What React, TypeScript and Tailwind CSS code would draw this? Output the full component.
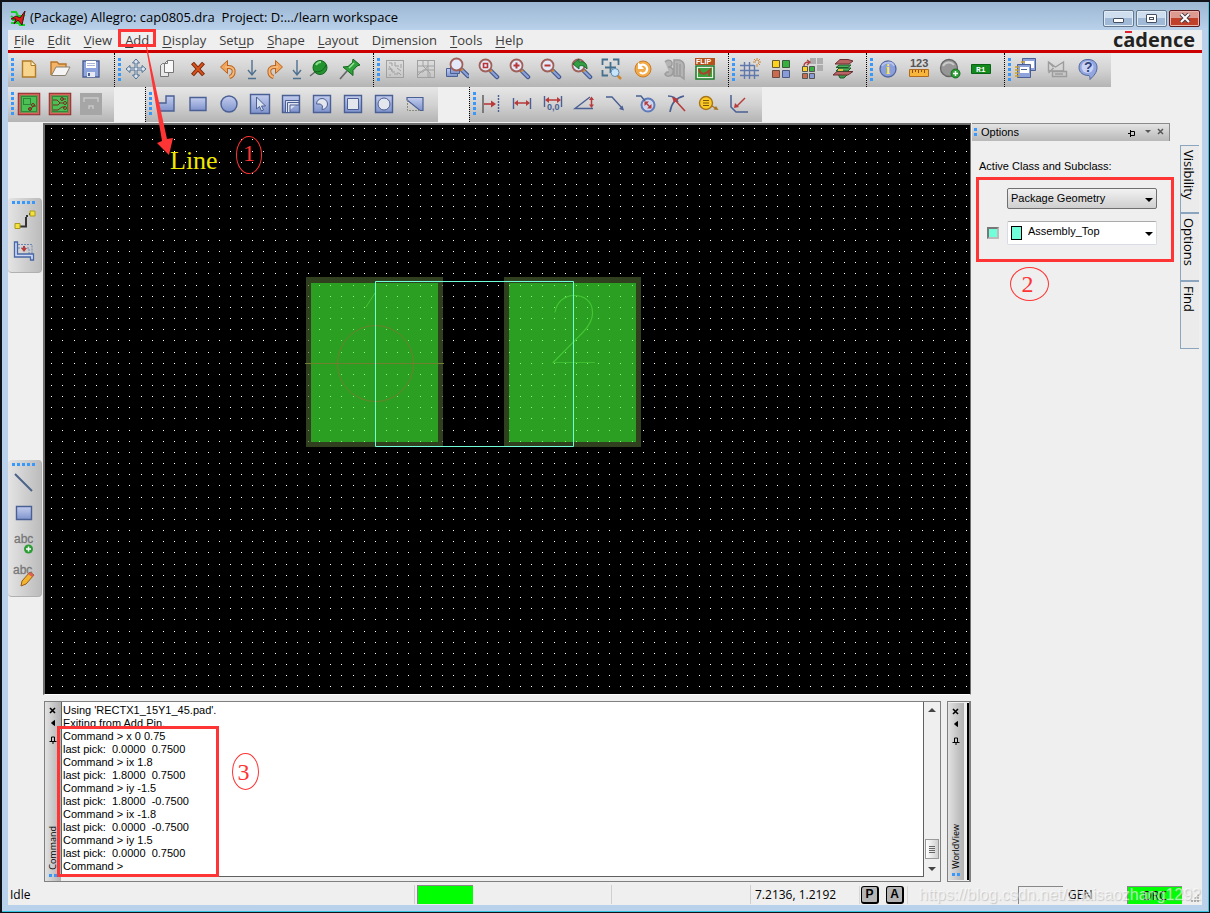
import React from "react";
import clsx from "clsx";

const Icon = ({ children }: { children: React.ReactNode }) => (
  <svg viewBox="0 0 24 24" width="24" height="24" fill="none" aria-hidden="true">
    {children}
  </svg>
);

const BLUE = "#4a5f93";
const FILL = "url(#steel)";

const Lens = ({ children }: { children?: React.ReactNode }) => (
  <>
    <path d="M15 14l6 6" stroke="#44598f" strokeWidth="4.500" strokeLinecap="round" />
    <path d="M15 14l6 6" stroke="#8ea4d8" strokeWidth="2" strokeLinecap="round" />
    <path d="M13 12l2.500 2.500" stroke="#d48a2c" strokeWidth="3" />
    <circle cx="9.500" cy="8.500" r="6" fill="#e4e9fa" stroke="#a0605a" strokeWidth="1.800" />
    {children}
  </>
);

const Undo = () => (
  <>
    <path
      d="M8 10h3.500c4 0 6 2.500 5 6-.500 2-2 3.500-4 4"
      stroke="#b8631f"
      strokeWidth="4"
    />
    <path d="M10.500 3.500v13L3.500 10z" fill="#f0a55c" stroke="#b8631f" />
    <path d="M8 10h3.500c4 0 6 2.500 5 6-.500 2-2 3.500-4 4" stroke="#f5b778" strokeWidth="2" />
  </>
);

const Board = ({ children }: { children: React.ReactNode }) => (
  <>
    <rect x="2" y="2" width="20" height="20" fill="#4cbf55" stroke="#8a2f2f" strokeWidth="2.500" />
    <rect x="2.500" y="2.500" width="19" height="19" stroke="#d8605c" strokeWidth="1.500" />
    <rect x="4.500" y="4.500" width="15" height="15" stroke="#2d8a38" />
    {children}
  </>
);

const GrayGrid = ({ d }: { d: string }) => (
  <>
    <rect x="3.500" y="3.500" width="17" height="17" stroke="#a0a0a0" />
    <path d={d} stroke="#a0a0a0" />
  </>
);

const Caret = () => (
  <path d="M12 3v14M8 13l4 5 4-5M8 21.500h8" stroke="#4f6f8f" strokeWidth="1.400" />
);

const icons: Record<string, React.ReactNode> = {
  New: (
    <>
      <path d="M5.500 4h9l4 4v12h-13z" fill="#f7d58e" stroke="#b07a28" strokeWidth="1.400" />
      <path d="M14 4v4.500h4.500" fill="#fff3cf" stroke="#b07a28" />
    </>
  ),
  Open: (
    <>
      <path d="M3 18V5h6l2 2h7v4" fill="#f3b468" stroke="#b8742a" strokeWidth="1.400" />
      <path d="M3.500 18.500L8 10h14l-4.500 8.500z" fill="#f4f4f4" stroke="#8a8070" />
    </>
  ),
  Save: (
    <>
      <path d="M4 4h16v16H4z" fill="#8ea4dc" stroke={BLUE} strokeWidth="1.400" />
      <path d="M7 4h10v7H7z" fill="#fff" />
      <path d="M8 6.500h8M8 8.500h8" stroke="#a9b6d8" />
      <path d="M8 15h8v5H8z" fill="#e6e9f2" />
      <path d="M9 16h2v3H9z" fill={BLUE} />
    </>
  ),
  Move: (
    <path
      d="M12 2l3.500 4H13v5h5V8.500l4 3.500-4 3.500V13h-5v5h2.500L12 22l-3.500-4H11v-5H6v2.500L2 12l4-3.500V11h5V6H8.500z"
      fill="#dfe6ef"
      stroke="#4f6f8f"
    />
  ),
  Copy: (
    <>
      <path d="M5.500 8.500l2-2h6v13h-8z" fill="#e8e8e8" stroke="#777" />
      <path d="M9.500 6.500l3-3h6v12h-9z" fill="#f8f8f8" stroke="#777" />
      <path d="M9.500 6.500h3v-3" stroke="#777" />
    </>
  ),
  Delete: (
    <>
      <path d="M6.500 6l11 12M17.500 6l-11 12" stroke="#7a2409" strokeWidth="4" />
      <path d="M7 6.500l10 11M17 6.500l-10 11" stroke="#d5521a" strokeWidth="2" />
    </>
  ),
  Undo: <Undo />,
  "Undo list": <Caret />,
  Redo: (
    <g transform="matrix(-1 0 0 1 24 0)">
      <Undo />
    </g>
  ),
  "Redo list": <Caret />,
  Unfix: (
    <>
      <path d="M8 15l-5 4" stroke="#666" strokeWidth="1.500" />
      <circle cx="13" cy="10.500" r="7" fill="#23932f" stroke="#16631f" />
      <path d="M7 14c4 2 10 0 12-6" stroke="#14601d" />
      <path d="M9 8c1-2 3-3 5-3" stroke="#8de08f" strokeWidth="2" />
    </>
  ),
  Fix: (
    <>
      <path d="M9 14l-7 8" stroke="#666" strokeWidth="1.600" />
      <path
        d="M15 2l7 6-3 1-4 4.500v5L5 10l5-.500 4.500-4z"
        fill="#2fa23c"
        stroke="#16631f"
      />
      <path d="M11 11l5-5" stroke="#9be59b" strokeWidth="1.500" />
    </>
  ),
  "Grid toggle": <GrayGrid d="M6 6h3v3M12 5v4h4M18 7v4M5 12h4v3h3M14 11l4 3M7 17v2M11 17h4v-2M6 9l3 5M16 16l2 2" />,
  Ratsnest: <GrayGrid d="M4 9h16M4 15h5l5-6M9 4v5l7 7v4M14 4v16M4 18l5-5h11" />,
  "Zoom points": (
    <>
      <path d="M1.500 11.500h11v8h-11z" fill={FILL} stroke={BLUE} />
      <path d="M5.500 7.500h9v9h-9z" fill={FILL} stroke={BLUE} />
      <g transform="translate(2 -1)">
        <Lens />
      </g>
    </>
  ),
  "Zoom fit": (
    <Lens>
      <path d="M7.500 6.500h4v4h-4z" stroke="#b83434" strokeWidth="1.600" />
    </Lens>
  ),
  "Zoom in": (
    <Lens>
      <path d="M6.500 8.500h6M9.500 5.500v6" stroke="#b83434" strokeWidth="2" />
    </Lens>
  ),
  "Zoom out": (
    <Lens>
      <path d="M6.500 8.500h6" stroke="#b83434" strokeWidth="2" />
    </Lens>
  ),
  "Zoom previous": (
    <Lens>
      <path d="M18 12c0-6-3-8-8-7V2L4 7l6 5V9c4-1 5 0 8 3z" fill="#34a043" stroke="#19682a" />
    </Lens>
  ),
  "Zoom selection": (
    <>
      <path
        d="M2.500 8V2.500H8M13 2.500h5.500V8M2.500 13v5.500H8M10.500 5v11M5 10.500h11"
        stroke="#44708e"
        strokeWidth="1.800"
      />
      <path d="M17 18l4 4" stroke="#cf8630" strokeWidth="2.500" />
      <circle cx="15" cy="15.500" r="4" fill="#c6e4fa" stroke="#5f8bb0" />
    </>
  ),
  Redraw: (
    <>
      <circle cx="12" cy="12" r="8" fill="#f3aa4a" stroke="#c97b23" />
      <path d="M8 9c6-4 10 2 7 6-2 2-5 2-6 0" stroke="#fff" strokeWidth="2.200" />
      <path d="M7 5v7h6z" fill="#fff" />
    </>
  ),
  "3D view": (
    <path
      d="M3 5c2-3 8-2 7 2 0 3-3 3-4 3 5 0 6 3 5 6-1 4-7 4-8 1l2-2h2M12 3h5c5 1 6 5 5 10v9l-4-3h-6zM15 6v12M18 7v13"
      fill="#b4b4b4"
      stroke="#9c9c9c"
      strokeWidth="1.500"
    />
  ),
  Flip: (
    <>
      <path d="M3 9h18v13H3z" fill="#e8f0e0" stroke="#1e7a2a" strokeWidth="1.500" />
      <path d="M5 11h14v9H5z" fill="#3ca33c" />
      <path d="M6 12c1 6 6 6 11 1l-1 6" stroke="#a8442c" strokeWidth="2" />
      <path d="M2 1h20v7H2z" fill="#b5521c" />
      <text x="3" y="7" fill="#fff" className="font-['Liberation_Sans'] text-[7px] font-bold">
        FLIP
      </text>
    </>
  ),
  Grid: (
    <>
      <path d="M6.500 5v17M11.500 5v17M16.500 8v14M2 8.500h14M2 13.500h19M2 18.500h19" stroke="#6078ac" strokeWidth="1.400" />
      <path d="M19 1v3M19 7v3M15 5h3M20 5h3M16 2l2 2M22 2l-2 2M22 8l-2-2" stroke="#c98a3c" />
    </>
  ),
  Colors: (
    <>
      <path d="M3.500 3.500h7v7h-7z" fill="#fbd21c" stroke="#6a5a30" />
      <path d="M13.500 3.500h7v7h-7z" fill="#37b03f" stroke="#3b5a3c" />
      <path d="M3.500 13.500h7v7h-7z" fill="#cb6b4d" stroke="#6b4a40" />
      <path d="M13.500 13.500h7v7h-7z" fill="#8a9cd8" stroke="#4c5880" />
    </>
  ),
  Shadow: (
    <>
      <path d="M10 1h6v6h-6zM17 1h6v6h-6zM17 8h6v6h-6z" fill="#adadad" />
      <path d="M4 9c0-3 2-4 5-4M7 3l3 2-3 3" stroke="#b04040" strokeWidth="1.400" />
      <path d="M2.500 9.500h5v5h-5z" fill="#fbd21c" stroke="#555" />
      <path d="M9.500 9.500h5v5h-5z" fill="#37b03f" stroke="#555" />
      <path d="M2.500 16.500h5v5h-5z" fill="#cb6b4d" stroke="#555" />
      <path d="M9.500 16.500h5v5h-5z" fill="#8a9cd8" stroke="#555" />
    </>
  ),
  "Cross section": (
    <>
      <path d="M7 17h10l-4 4H9z" fill="#3a9a4a" stroke="#1f5a2a" />
      <path d="M6 14.500h16l-5 3.500H2z" fill="#b86464" stroke="#6a2f2f" />
      <path d="M8 11h12l-3 3H5z" fill="#4bb058" stroke="#1f5a2a" />
      <path d="M8 8h12l-3 2.500H5z" fill="#4bb058" stroke="#1f5a2a" />
      <path d="M9 2.500h8l5 1.500-4 3H4z" fill="#b86464" stroke="#6a2f2f" />
      <path d="M7 13h5" stroke="#e2c04a" strokeWidth="2" />
    </>
  ),
  Info: (
    <>
      <circle cx="12" cy="12" r="8" fill="#8a9fdc" stroke="#51669c" strokeWidth="1.300" />
      <path d="M6 9c2-4 10-5 12 0" stroke="#b5c2ee" strokeWidth="2" />
      <text x="10" y="17" fill="#ffe94a" className="font-['Liberation_Serif'] text-[14px] font-bold">
        i
      </text>
    </>
  ),
  Measure: (
    <>
      <text x="3" y="10" fill="#555" className="font-['Liberation_Sans'] text-[11px] font-bold">
        123
      </text>
      <path d="M2.500 12.500h19v7h-19z" fill="#f7b53c" stroke="#b26a1c" />
      <path d="M5.500 13v3M8.500 13v2M11.500 13v3M14.500 13v2M17.500 13v3" stroke="#8f4d10" />
    </>
  ),
  "Add via": (
    <>
      <circle cx="11" cy="11" r="8.500" fill="#969696" stroke="#666" strokeWidth="1.300" />
      <path d="M5 9c2-4 8-5 11-1" stroke="#c9c9c9" strokeWidth="2" />
      <circle cx="17.500" cy="16.500" r="4.500" fill="#2b9d34" stroke="#1b6b24" />
      <path d="M15 16.500h5M17.500 14v5" stroke="#fff" strokeWidth="1.500" />
    </>
  ),
  "Ref des": (
    <>
      <path d="M2.500 7.500h19v9h-19z" fill="#128a1e" stroke="#0b6414" />
      <text x="7" y="15" fill="#fff" className="font-['Liberation_Mono'] text-[8px] font-bold">
        R1
      </text>
    </>
  ),
  Reports: (
    <>
      <path d="M8.500 1.500h13v12h-13z" fill="#8fa2dc" stroke={BLUE} />
      <path d="M11 4h9v7h-9z" fill="#fff" />
      <path d="M3.500 7.500h13v13h-13z" fill="#8fa2dc" stroke={BLUE} />
      <path d="M6 10h9v6H6z" fill="#fff" />
      <path d="M7 12.500h6" stroke={BLUE} />
      <path d="M1 10h4M1 13h4M1 16h4M1 19h4M7 5h4" stroke="#d2a31c" strokeWidth="1.600" />
    </>
  ),
  Mail: (
    <>
      <path d="M3.500 5l7 5 8-5v9h-15z" stroke="#9c9c9c" strokeWidth="1.400" />
      <path d="M3.500 16l5-5M3.500 5l5 5" stroke="#9c9c9c" strokeWidth="1.400" />
      <path d="M7.500 14.500h14v5h-14zM10 17h8" fill="#c8c8c8" stroke="#9c9c9c" strokeWidth="1.400" />
    </>
  ),
  Help: (
    <>
      <path
        d="M12 2.500c5.500 0 9 3 9 8 0 5-3 8-7 12 0-2 0-3-1-4-6 0-10-3-10-8s3.500-8 9-8z"
        fill="#93a6e0"
        stroke="#51669c"
      />
      <circle cx="11.500" cy="10" r="6" fill="#c9d3f5" />
      <text x="8" y="15" fill="#36457a" className="font-['Liberation_Sans'] text-[14px] font-bold">
        ?
      </text>
    </>
  ),
  "Place mode": (
    <Board>
      <path d="M6.500 6.500h7v6h-7z" stroke="#0f4a1a" strokeDasharray="1 1" />
      <path d="M11 17h3l2-3h3" stroke="#7a2c20" />
      <circle cx="16" cy="13" r="1.500" stroke="#7a2c20" />
      <circle cx="13" cy="17" r="1.500" stroke="#7a2c20" />
    </Board>
  ),
  "Etch mode": (
    <Board>
      <path d="M5 8h4l3 3h3M5 13h5l2-2M5 18h5l4-3h3M14 7h4" stroke="#7a2c20" />
      <circle cx="14" cy="7" r="1.500" stroke="#7a2c20" />
      <circle cx="17" cy="11" r="1.500" stroke="#7a2c20" />
      <circle cx="17" cy="16" r="1.500" stroke="#7a2c20" />
    </Board>
  ),
  "Shape mode": (
    <>
      <path d="M1 1h22v22H1z" fill="#a6a6a6" />
      <path d="M5 10V6h14v4M10 17v-3h4v3" stroke="#c8c8c8" strokeWidth="1.500" />
    </>
  ),
  Polygon: <path d="M3 19v-8h8V4h8v15z" fill={FILL} stroke={BLUE} strokeWidth="1.400" />,
  Rectangle: <path d="M4 5.500h16v13H4z" fill={FILL} stroke={BLUE} strokeWidth="1.400" />,
  Circle: <circle cx="12" cy="12" r="8" fill={FILL} stroke={BLUE} strokeWidth="1.400" />,
  "Select shape": (
    <>
      <path d="M2.500 2.500h19v19h-19z" fill={FILL} stroke={BLUE} strokeWidth="1.400" />
      <path d="M8.500 5v12l3-2.500 2 4.500 2-1-2-4h4z" fill="#dde2f0" stroke={BLUE} />
    </>
  ),
  "Void polygon": (
    <>
      <path d="M3.500 3.500h17v17h-17z" fill={FILL} stroke={BLUE} strokeWidth="1.400" />
      <path d="M6.500 20V8.500H20V13h-9v7M8.500 20v-9.500H20" fill="#dde2f0" stroke={BLUE} />
    </>
  ),
  "Void arc": (
    <>
      <path d="M3.500 3.500h17v17h-17z" fill={FILL} stroke={BLUE} strokeWidth="1.400" />
      <path d="M12 17.500a5.500 5.500 0 1 0-5.500-5.500h4l2 2z" fill="#e4e6ee" stroke={BLUE} />
    </>
  ),
  "Void rectangle": (
    <>
      <path d="M3.500 3.500h17v17h-17z" fill={FILL} stroke={BLUE} strokeWidth="1.400" />
      <path d="M6.500 6.500h11v11h-11z" fill="#e4e6ee" stroke={BLUE} />
    </>
  ),
  "Void circle": (
    <>
      <path d="M3.500 3.500h17v17h-17z" fill={FILL} stroke={BLUE} strokeWidth="1.400" />
      <circle cx="12" cy="12" r="6" fill="#e4e6ee" stroke={BLUE} />
    </>
  ),
  "Island delete": (
    <>
      <path d="M4 5.500h16v13h-3L4 8z" fill={FILL} stroke={BLUE} strokeWidth="1.200" />
      <path d="M4.500 8v10.500H17" stroke="#8a8a7a" strokeDasharray="2 1" />
    </>
  ),
  Datum: (
    <>
      <path d="M4 3v18" stroke="#666" strokeWidth="1.600" />
      <path d="M19.500 3v18" stroke={BLUE} strokeWidth="1.400" strokeDasharray="2 1" />
      <path d="M5 12h8" stroke="#b83a3a" strokeWidth="1.600" />
      <path d="M12 8.500l5 3.500-5 3.500z" fill="#b83a3a" />
    </>
  ),
  Linear: (
    <>
      <path d="M3.500 6v11M20.500 6v11" stroke={BLUE} strokeWidth="1.400" />
      <path d="M6 11h12" stroke="#b83a3a" strokeWidth="1.500" />
      <path d="M4 11l4-3v6zM20 11l-4-3v6z" fill="#b83a3a" />
    </>
  ),
  "Linear offset": (
    <>
      <path d="M3.500 4v11M20.500 4v11" stroke={BLUE} strokeWidth="1.400" />
      <path d="M6 8h12" stroke="#b83a3a" strokeWidth="1.500" />
      <path d="M4 8l4-3v6zM20 8l-4-3v6z" fill="#b83a3a" />
      <text x="6" y="18" fill={BLUE} className="font-['Liberation_Sans'] text-[9px] font-bold">
        0,0
      </text>
    </>
  ),
  Angular: (
    <>
      <path d="M21 16.500H3L18 5" stroke={BLUE} strokeWidth="1.400" />
      <path d="M19.500 7v7" stroke="#b83a3a" strokeWidth="1.500" />
      <path d="M17 8l2.500-3.500L22 8zM17 12.500l2.500 3.500 2.500-3.500z" fill="#b83a3a" />
    </>
  ),
  Leader: (
    <>
      <path d="M3 5h6l10 11" stroke={BLUE} strokeWidth="1.400" />
      <path d="M21 18.500l-5-1.500 3.500-3.500z" fill={BLUE} />
    </>
  ),
  Diametral: (
    <>
      <circle cx="14" cy="13" r="6.500" stroke="#5f7ab8" strokeWidth="2" fill="#cdd6ee" />
      <path d="M2 4h5l4 5" stroke={BLUE} strokeWidth="1.400" />
      <path d="M12 11l4 4" stroke="#b83a3a" strokeWidth="1.500" />
      <path d="M10.500 9.500h4.500l-4.500 4.500zM17.500 16.500h-4.500l4.500-4.500z" fill="#b83a3a" />
    </>
  ),
  Radial: (
    <>
      <path d="M3 4c5 0 8 2 10 6M19 4C10 6 6 13 5 20" stroke={BLUE} strokeWidth="1.600" />
      <path d="M9 7l11 12" stroke="#b83a3a" strokeWidth="1.600" />
      <path d="M7 5l6.500 2-4.500 4z" fill="#b83a3a" />
    </>
  ),
  Balloon: (
    <>
      <circle cx="10" cy="11" r="6.500" fill="#fbcb24" stroke="#a8741a" strokeWidth="1.400" />
      <path d="M7 8.500h6M7 11h6M7 13.500h6" stroke="#7a5510" />
      <path d="M16 14l4 2.500" stroke="#a8741a" strokeWidth="1.400" />
      <path d="M22.500 18l-5-.500 2.500-3.500z" fill="#a8741a" />
    </>
  ),
  Chamfer: (
    <>
      <path d="M4 3v12l5 5h12" stroke={BLUE} strokeWidth="1.500" />
      <path d="M18 6l-8 8" stroke="#b83a3a" strokeWidth="1.500" />
      <path d="M7 16l1-5 4 4z" fill="#b83a3a" />
    </>
  ),
  "Add connect": (
    <>
      <path d="M8 18.500h6V9" stroke="#333" strokeWidth="2" />
      <path d="M14 7h2v2h-2zM17 5h2v2h-2z" fill="#333" />
      <path d="M3 15.500h5v5H3z" fill="#f2e23a" stroke="#a89820" />
      <path d="M18 3h5v5h-5z" fill="#f2e23a" stroke="#a89820" />
    </>
  ),
  Slide: (
    <>
      <path d="M6 5.500h14v10M6 9h11v6" stroke="#6f86b5" strokeDasharray="2 1" />
      <path d="M2.500 3h3v12h16v6h-3v-3h-16z" fill="#cdd9f3" stroke="#4866a4" strokeWidth="1.300" />
      <path d="M12 7v3" stroke="#b83a3a" strokeWidth="2" />
      <path d="M9 9h6l-3 4z" fill="#b83a3a" />
    </>
  ),
  Line: <path d="M3 4l17 17" stroke="#4a6289" strokeWidth="2" />,
  Rect: <path d="M4.500 5.500h15v13h-15z" fill={FILL} stroke={BLUE} strokeWidth="1.400" />,
  "Add text": (
    <>
      <text x="2" y="11" fill="#777" stroke="#777" strokeWidth="0.300" className="font-['Liberation_Sans'] text-[12px]">
        abc
      </text>
      <circle cx="16.500" cy="17" r="4.500" fill="#2b9d34" />
      <path d="M14 17h5M16.500 14.500v5" stroke="#fff" strokeWidth="1.500" />
    </>
  ),
  "Edit text": (
    <>
      <text x="1" y="11" fill="#777" stroke="#777" strokeWidth="0.300" className="font-['Liberation_Sans'] text-[12px]">
        abc
      </text>
      <path d="M10 18l8-9 4 3-8 9-5 2z" fill="#f3b52f" stroke="#9a5a1a" />
      <path d="M18 9l4 3-2 2-4-3z" fill="#d8605a" />
    </>
  ),
};

const rowOne = [
  ["New", "Open", "Save"],
  ["Move", "Copy", "Delete", "Undo", "Undo list", "Redo", "Redo list", "Unfix", "Fix"],
  [
    "Grid toggle",
    "Ratsnest",
    "Zoom points",
    "Zoom fit",
    "Zoom in",
    "Zoom out",
    "Zoom previous",
    "Zoom selection",
    "Redraw",
    "3D view",
    "Flip",
  ],
  ["Grid", "Colors", "Shadow", "Cross section"],
  ["Info", "Measure", "Add via", "Ref des"],
  ["Reports", "Mail", "Help"],
];

const shapeTools = [
  "Polygon",
  "Rectangle",
  "Circle",
  "Select shape",
  "Void polygon",
  "Void arc",
  "Void rectangle",
  "Void circle",
  "Island delete",
];

const dimensionTools = [
  "Datum",
  "Linear",
  "Linear offset",
  "Angular",
  "Leader",
  "Diametral",
  "Radial",
  "Balloon",
  "Chamfer",
];

const menus: [string, string, string][] = [
  ["", "F", "ile"],
  ["", "E", "dit"],
  ["", "V", "iew"],
  ["", "A", "dd"],
  ["", "D", "isplay"],
  ["Set", "u", "p"],
  ["", "S", "hape"],
  ["", "L", "ayout"],
  ["D", "i", "mension"],
  ["", "T", "ools"],
  ["", "H", "elp"],
];

const log = `Using 'RECTX1_15Y1_45.pad'.
Exiting from Add Pin.
Command > x 0 0.75
last pick:  0.0000  0.7500
Command > ix 1.8
last pick:  1.8000  0.7500
Command > iy -1.5
last pick:  1.8000  -0.7500
Command > ix -1.8
last pick:  0.0000  -0.7500
Command > iy 1.5
last pick:  0.0000  0.7500
Command >`;

const ToolButton = ({ name }: { name: string }) => (
  <button
    type="button"
    aria-label={name}
    className={clsx(
      "flex h-[30px] shrink-0 items-center justify-center",
      name.endsWith(" list") ? "w-[13px]" : "w-[30px]"
    )}
  >
    <span className="shrink-0">
      <Icon>{icons[name]}</Icon>
    </span>
  </button>
);

const Dots = ({ count, vertical }: { count: number; vertical?: boolean }) => (
  <div className={clsx("flex shrink-0 gap-[2px]", vertical && "flex-col")}>
    {Array.from({ length: count }, (_, i) => (
      <span key={i} className="h-[3px] w-[3px] bg-[#3a98fb]" />
    ))}
  </div>
);

const ToolGroup = ({ tools, first }: { tools: string[]; first?: boolean }) => (
  <div
    className={clsx(
      "flex h-full shrink-0 items-center bg-linear-to-b from-[#e6e6e6] via-[#d2d2d2] to-[#b4b4b4] pr-2 pb-[2px] pl-[3px]",
      !first && "border-l border-dotted border-black"
    )}
  >
    <Dots count={5} vertical />
    <div className="flex gap-px">
      {tools.map((name) => (
        <ToolButton key={name} name={name} />
      ))}
    </div>
  </div>
);

const SideTools = ({ tools }: { tools: string[] }) => (
  <div className="flex w-[34px] flex-col items-center rounded-sm border-r border-b border-[#b0b0b0] bg-linear-to-r from-[#e4e4e4] to-[#bcbcbc] pt-[3px] pr-[2px] pb-[6px]">
    <Dots count={5} />
    <div className="mt-px flex flex-col gap-px">
      {tools.map((name) => (
        <ToolButton key={name} name={name} />
      ))}
    </div>
  </div>
);

// the plotted grid has a fractional pitch, every point is snapped to a pixel
const gridPath = (() => {
  let d = "";
  for (let row = 0; row < 51; row++) {
    for (let col = 0; col < 83; col++) {
      d += `M${6 + Math.floor(col * 11.16 + 0.82)} ${3 + Math.floor(row * 11.16 + 0.82)}h1v1h-1z`;
    }
  }
  return d;
})();

const Pad = ({ x }: { x: number }) => (
  <g opacity="0.65">
    <path
      d={`M${x} 152h137v170h-137zM${x + 5} 158v159h127v-159z`}
      fill="#4a622e"
      fillRule="evenodd"
    />
    <path d={`M${x + 5} 158h127v159h-127z`} fill="#41f534" />
  </g>
);

const Canvas = () => (
  <main className="relative min-h-[570px] flex-1 overflow-hidden border-t-2 border-r border-b border-l-2 border-[#6e6e6e] border-b-white bg-black">
    <svg className="absolute inset-0 h-full w-full">
      <path d={gridPath} fill="#fff" shapeRendering="crispEdges" />
      <Pad x={261} />
      <Pad x={459} />
      <path d="M321 182l9-14" stroke="#45c535" fill="none" />
      <text x="501" y="238" fill="#45c535" className="font-[Lato] text-[97px] font-thin">
        2
      </text>
      <circle cx="330.500" cy="238.500" r="38" stroke="#70802f" fill="none" />
      <path d="M260 238.500h139" stroke="#70802f" />
      <path d="M330.500 156.500h198v165h-198z" stroke="#70ffd8" fill="none" />
    </svg>
    <div className="absolute top-6 left-[125px] font-['Liberation_Serif',serif] text-[26px] leading-6 text-[#f0e800]">
      Line
    </div>
    <Mark className="top-[11px] left-[191px] h-[38px] w-[26px] pb-1">1</Mark>
  </main>
);

const Mark = ({
  children,
  className,
}: {
  children: React.ReactNode;
  className: string;
}) => (
  <div
    className={clsx(
      "absolute flex items-center justify-center rounded-[50%] border border-[#ff3434] font-['Liberation_Serif',serif] text-2xl text-[#ff3434]",
      className
    )}
  >
    {children}
  </div>
);

const DockStrip = ({ title }: { title: string }) => (
  <div className="flex w-4 shrink-0 flex-col items-center bg-linear-to-r from-[#e2e2e2] to-[#b2b2b2] py-1">
    <svg width="10" height="42" fill="none" stroke="#000" aria-hidden="true">
      <path d="M2 2l5 5M7 2L2 7" strokeWidth="1.600" />
      <path d="M6.500 14.500v5l-3-2.500z" fill="#000" />
      <path d="M5 38v-3M1.500 35.500h7M3.500 35v-4h3v4" />
    </svg>
    <span className="mt-auto mb-1 rotate-180 font-[Open_Sans,sans-serif] text-[9px] leading-[12px] text-black [writing-mode:vertical-rl]">
      {title}
    </span>
    <Dots count={2} />
  </div>
);

const CommandDock = () => (
  <section className="relative flex flex-1 border border-[#808080]">
    <DockStrip title="Command" />
    <textarea
      readOnly
      aria-label="Command"
      rows={13}
      value={log}
      className="mb-1 block flex-1 resize-none overflow-hidden border-r border-b border-l border-[#606060] bg-white px-px pt-[2px] pb-[3px] font-['Liberation_Sans',sans-serif] text-[11px] leading-[13px] text-black outline-none"
    />
    <div className="mb-1 flex w-4 flex-col items-center py-1 text-[#444]">
      <svg width="8" height="8" fill="#444" aria-hidden="true">
        <path d="M0 6h8L4 2z" />
      </svg>
      <div className="mt-auto mb-[6px] flex h-5 w-[14px] flex-col items-center justify-center gap-px border border-[#999] bg-linear-to-r from-white to-[#d0d0d0]">
        <span className="h-px w-[6px] bg-[#666]" />
        <span className="h-px w-[6px] bg-[#666]" />
        <span className="h-px w-[6px] bg-[#666]" />
        <span className="h-px w-[6px] bg-[#666]" />
      </div>
      <svg width="8" height="8" fill="#444" aria-hidden="true">
        <path d="M0 2h8L4 6z" />
      </svg>
    </div>
    <div className="pointer-events-none absolute top-6 left-3 h-[151px] w-[162px] border-[3px] border-[#ff3434]" />
    <Mark className="top-[51px] left-[187px] h-[37px] w-[27px] pr-1">3</Mark>
  </section>
);

const selectClass =
  "w-full appearance-none rounded-[2px] border font-['Liberation_Sans',sans-serif] text-[11px] text-black outline-none";

const Arrow = () => (
  <svg
    className="pointer-events-none absolute top-1/2 right-1 -mt-px"
    width="8"
    height="4"
    aria-hidden="true"
  >
    <path d="M0 0h8L4 4z" fill="#000" />
  </svg>
);

const OptionsPanel = () => (
  <aside className="flex w-[231px] shrink-0">
    <div className="w-[199px] pl-px font-['Liberation_Sans',sans-serif] text-[11px] text-black">
      <div className="flex h-[18px] items-center border-t border-r border-[#8a8a8a] bg-linear-to-b from-[#e4e4e4] to-[#b8b8b8] pr-[2px] pb-px pl-[2px]">
        <Dots count={2} vertical />
        <h2 className="ml-1 flex-1">Options</h2>
        <svg width="40" height="12" fill="none" stroke="#000" aria-hidden="true">
          <path d="M1 7.500h2M3.500 4v7M3.500 5.500h4v4h-4" />
          <path d="M18 4h6l-3 3z" fill="#555" stroke="none" />
          <path d="M31 3l5 5M36 3l-5 5" stroke="#555" strokeWidth="1.500" />
        </svg>
      </div>
      <p className="mt-[17px] pl-[7px] leading-4">Active Class and Subclass:</p>
      <div className="relative mt-[3px] ml-1 flex h-[85px] w-[198px] flex-col gap-3 border-[3px] border-[#ff3434] py-2 pr-[14px] pl-2">
        <div className="relative ml-5">
          <select
            aria-label="Active class"
            className={clsx(
              selectClass,
              "h-[21px] border-[#707070] bg-linear-to-b from-[#f2f2f2] to-[#cfcfcf] pl-[3px]"
            )}
          >
            <option>Package Geometry</option>
          </select>
          <Arrow />
        </div>
        <div className="flex items-center gap-2">
          <input
            type="checkbox"
            aria-label="Subclass visible"
            className="h-3 w-3 shrink-0 appearance-none border-2 border-[#777] border-r-[#bbb] border-b-[#bbb] bg-[#70ffd8]"
          />
          <div className="relative flex-1">
            <select
              aria-label="Active subclass"
              className={clsx(
                selectClass,
                "h-6 border-[#d8dce4] border-t-[#aaa] bg-white pb-1 pl-[20px]"
              )}
            >
              <option>Assembly_Top</option>
            </select>
            <span className="pointer-events-none absolute top-[5px] left-1 h-[14px] w-[11px] border border-black bg-[#70ffd8]" />
            <Arrow />
          </div>
        </div>
        <Mark className="top-[87px] left-[31px] h-[34px] w-[39px] pr-1">2</Mark>
      </div>
    </div>
    <div className="mt-[22px] ml-[10px] flex w-[19px] flex-col">
      {["Visibility", "Options", "Find"].map((tab) => (
        <button
          key={tab}
          type="button"
          className="flex h-[68px] items-center border border-r-0 border-[#8ca5be] bg-[#ebebeb] pt-1 pr-[3px] font-[Open_Sans,sans-serif] text-[13px] leading-[15px] text-black [writing-mode:vertical-rl]"
        >
          {tab}
        </button>
      ))}
    </div>
  </aside>
);

const StatusKey = ({ children }: { children: string }) => (
  <button
    type="button"
    className="h-[18px] w-[18px] rounded-[3px] border-2 border-t border-l border-black bg-[#b4b4b4] text-center font-['Liberation_Sans',sans-serif] text-xs leading-[14px] font-bold"
  >
    {children}
  </button>
);

const StatusBar = () => (
  <footer className="relative mt-[2px] flex h-[21px] items-center font-[Open_Sans,sans-serif] text-xs text-black">
    <span className="w-[406px] pl-[2px]">Idle</span>
    <span className="h-[19px] w-[197px] border-l border-[#cfcfcf] pl-[2px]">
      <span className="block h-[19px] w-14 border-t border-l border-[#888] bg-[#00ff00]" />
    </span>
    <span className="h-[19px] flex-1 border-l border-[#cfcfcf]" />
    <span className="h-[19px] w-[109px] border-l border-[#cfcfcf] pl-1 leading-[20px]">
      7.2136, 1.2192
    </span>
    <span className="flex gap-[7px] border-x border-[#d8d8d8] pr-[3px] pl-px">
      <StatusKey>P</StatusKey>
      <StatusKey>A</StatusKey>
    </span>
    <span className="ml-[110px] h-[18px] w-[45px] border-t border-l border-[#888]" />
    <span className="ml-[5px] w-[59px]">GEN</span>
    <span className="mr-[20px] h-[18px] w-[55px] border-t border-l border-[#888] bg-[#00ff00] text-center leading-[18px]">
      DRC
    </span>
    <svg className="absolute right-[2px] bottom-[2px]" width="9" height="9" fill="#b0b0b0" aria-hidden="true">
      <path d="M6 0h2v2h-2zM3 3h2v2h-2zM6 3h2v2h-2zM0 6h2v2h-2zM3 6h2v2h-2zM6 6h2v2h-2z" />
    </svg>
    <span className="pointer-events-none absolute right-[1px] font-['Liberation_Sans',sans-serif] text-base text-white/60 [text-shadow:1px_1px_1px_#9997]">
      https://blog.csdn.net/zhaisaozhang1292
    </span>
  </footer>
);

const TitleBar = () => (
  <header className="flex h-7 items-center pl-[2px] font-[Open_Sans,sans-serif] text-[13px] text-black">
    <svg width="16" height="16" fill="none" aria-hidden="true" className="mt-1">
      <path d="M1 2h5l2 4h6M1 6l4 3h9M1 13h6l3-5 5-3M2 10h5l3 5h5" stroke="#16d028" strokeWidth="2" />
      <path d="M1 9l5-3 4 2 5-7-3 14-4-5-4 4 2-5z" fill="#e01818" stroke="#4a1010" />
    </svg>
    <h1 className="mt-1 ml-1 flex-1 whitespace-pre">
      (Package) Allegro: cap0805.dra  Project: D:.../learn workspace
    </h1>
    <div className="mt-1 flex gap-[2px] pr-[2px]">
      <button type="button" aria-label="Minimize" className="flex h-[17px] w-[31px] items-center justify-center rounded-[2px] border border-[#66788e] bg-linear-to-b from-[#cfdeee] from-50% to-[#9fb9d6] to-50% shadow-[inset_0_0_0_1px_#e0ebf6]">
        <span className="mt-1 h-[5px] w-[11px] rounded-[1px] border border-[#444e60] bg-white" />
      </button>
      <button type="button" aria-label="Maximize" className="flex h-[17px] w-[31px] items-center justify-center rounded-[2px] border border-[#66788e] bg-linear-to-b from-[#cfdeee] from-50% to-[#9fb9d6] to-50% shadow-[inset_0_0_0_1px_#e0ebf6]">
        <span className="flex h-[9px] w-[11px] items-center justify-center rounded-[1px] border border-[#444e60] bg-white">
          <span className="h-[3px] w-[5px] border border-[#444e60]" />
        </span>
      </button>
      <button type="button" aria-label="Close" className="flex h-[17px] w-[31px] items-center justify-center rounded-[2px] border border-[#5a1a1c] bg-linear-to-b from-[#dd9a90] from-50% to-[#c0402a] to-50% shadow-[inset_0_0_0_1px_#e8b4ac]">
        <svg width="12" height="10" fill="none" aria-hidden="true">
          <path d="M2 1l8 8M10 1L2 9" stroke="#4b3b48" strokeWidth="4" />
          <path d="M2 1l8 8M10 1L2 9" stroke="#fff" strokeWidth="2" />
        </svg>
      </button>
    </div>
  </header>
);

const MenuBar = () => (
  <nav className="relative z-10 flex h-5 items-center gap-[13px] pl-[6px] font-[Open_Sans,sans-serif] text-[13px] text-[#3c3c3c]">
    {menus.map(([before, key, after]) => (
      <button key={before + key + after} type="button" className="relative leading-5">
        {before}
        <span className="underline underline-offset-2">{key}</span>
        {after}
        {after === "dd" && (
          <>
            <span className="pointer-events-none absolute -top-px -left-[7px] h-[18px] w-[38px] border-[3px] border-[#ff3434]" />
            <svg
              className="pointer-events-none absolute top-4 left-5"
              width="32"
              height="112"
              fill="#ff3434"
              aria-hidden="true"
            >
              <path d="M1 1h1l20 92 6-1-4 17L12 97l5-2z" />
            </svg>
          </>
        )}
      </button>
    ))}
    <div className="relative ml-auto pr-[7px] font-[Open_Sans,sans-serif] text-xl leading-5 font-bold text-[#222]">
      cadence
      <span className="absolute top-px left-3 h-[2px] w-[7px] bg-[#e02030]" />
    </div>
  </nav>
);

export default function App() {
  return (
    <div className="flex min-h-screen flex-col border-t-2 border-r border-b border-l-2 border-[#10131a] bg-[#b9d1ea]">
      <svg width="0" height="0" className="absolute" aria-hidden="true">
        <linearGradient id="steel" x1="0" y1="0" x2="0" y2="1">
          <stop offset="0" stopColor="#c3cdee" />
          <stop offset="1" stopColor="#7f93cc" />
        </linearGradient>
      </svg>
      <div className="flex flex-1 flex-col border-r border-b border-[#35c5e0] bg-linear-to-b from-[#9cb6d3] to-[#b9d1ea] to-[28px] px-[6px] pb-[6px]">
        <TitleBar />
        <div className="flex flex-1 flex-col bg-[#efefef]">
          <MenuBar />
          <div className="flex h-[37px] border-t-[3px] border-[#cc0000]">
            {rowOne.map((tools, i) => (
              <ToolGroup key={i} tools={tools} first={i === 0} />
            ))}
          </div>
          <div className="flex h-[35px]">
            <ToolGroup tools={["Place mode", "Etch mode", "Shape mode"]} first />
            <div className="w-[31px]" />
            <ToolGroup tools={shapeTools} />
            <div className="w-[31px]" />
            <ToolGroup tools={dimensionTools} />
          </div>
          <div className="mt-px flex flex-1">
            <div className="flex w-[35px] shrink-0 flex-col gap-[187px] pt-[75px]">
              <SideTools tools={["Add connect", "Slide"]} />
              <SideTools tools={["Line", "Rect", "Add text", "Edit text"]} />
            </div>
            <div className="flex min-w-0 flex-1 flex-col gap-[6px]">
              <Canvas />
              <div className="flex gap-[6px] pl-px">
                <CommandDock />
                <section className="flex w-6 gap-[3px] border border-r-2 border-[#808080] py-px">
                  <DockStrip title="WorldView" />
                  <div className="flex-1 bg-black" />
                </section>
              </div>
            </div>
            <OptionsPanel />
          </div>
          <StatusBar />
        </div>
      </div>
    </div>
  );
}
